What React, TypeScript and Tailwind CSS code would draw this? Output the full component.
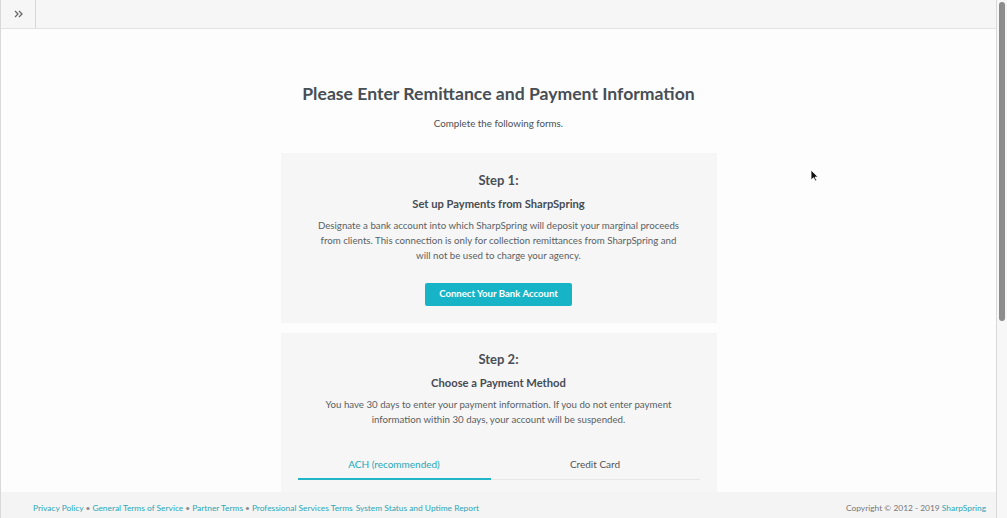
import React, { useState } from "react";

const font = { fontFamily: "Lato, 'Open Sans', Arial, sans-serif" };

type Tab = "ach" | "card";

export default function App() {
  const [tab, setTab] = useState<Tab>("ach");

  return (
    <div className="relative flex h-[518px] w-full overflow-hidden bg-[#fdfdfd] text-[#4a5056]" style={font}>
      {/* page */}
      <div className="flex min-w-0 flex-1 flex-col border-l border-r border-[#d9d9d9]">
        {/* top bar */}
        <div className="flex h-[29px] shrink-0 border-b border-[#e3e3e3] bg-[#f6f6f6]">
          <button className="flex w-[35px] items-center justify-center border-r border-[#d6d6d6] text-[#666]">
            <svg width="9" height="8" viewBox="0 0 9 8" fill="none" stroke="currentColor" strokeWidth="1.3">
              <path d="M1 1l3 3-3 3M5 1l3 3-3 3" />
            </svg>
          </button>
          <div className="flex-1" />
        </div>

        {/* content */}
        <div className="min-h-0 flex-1 overflow-hidden">
          <div className="flex flex-col items-center pt-[53px]">
            <h1 className="text-[17.6px] font-bold leading-[24px] text-[#474e55]">Please Enter Remittance and Payment Information</h1>
            <p className="mt-[9px] text-[9.75px] leading-[16px] text-[#4b4f54]">Complete the following forms.</p>

            {/* step 1 */}
            <div className="mt-[22px] flex w-[436px] flex-col items-center bg-[#f6f6f6] px-4 pb-[17px] pt-[18px] text-center">
              <h2 className="text-[13px] font-bold leading-[18px] text-[#4a4f55]">Step 1:</h2>
              <h3 className="mt-[7px] text-[11.2px] font-bold leading-[16px] text-[#474c52]">Set up Payments from SharpSpring</h3>
              <p className="mt-[6px] w-[370px] text-[9.7px] leading-[15px] text-[#5a5f64]">
                Designate a bank account into which SharpSpring will deposit your marginal proceeds from clients. This connection is only for collection remittances from SharpSpring and will not be used to charge your agency.
              </p>
              <button className="mt-[20px] h-[23px] w-[147px] rounded-[2px] bg-[#17b4c7] text-[9.6px] font-bold text-white">
                Connect Your Bank Account
              </button>
            </div>

            {/* step 2 */}
            <div className="mt-[10px] flex w-[436px] flex-col items-center bg-[#f6f6f6] px-[17px] pb-6 pt-[17px] text-center">
              <h2 className="text-[13px] font-bold leading-[18px] text-[#4a4f55]">Step 2:</h2>
              <h3 className="mt-[7px] text-[11.2px] font-bold leading-[16px] text-[#474c52]">Choose a Payment Method</h3>
              <p className="mt-[6px] w-[360px] text-[9.7px] leading-[15px] text-[#5a5f64]">
                You have 30 days to enter your payment information. If you do not enter payment information within 30 days, your account will be suspended.
              </p>
              <div className="mt-[29px] flex w-full">
                <button
                  onClick={() => setTab("ach")}
                  className={
                    tab === "ach"
                      ? "w-[193px] border-b-2 border-[#22b5c6] pb-[6px] text-[10px] leading-[16px] text-[#22a9b9]"
                      : "w-[193px] border-b border-[#e6e6e6] pb-[7px] text-[10px] leading-[16px] text-[#555]"
                  }
                >
                  ACH (recommended)
                </button>
                <button
                  onClick={() => setTab("card")}
                  className={
                    tab === "card"
                      ? "flex-1 border-b-2 border-[#22b5c6] pb-[6px] text-[10px] leading-[16px] text-[#22a9b9]"
                      : "flex-1 border-b border-[#e6e6e6] pb-[7px] text-[10px] leading-[16px] text-[#555]"
                  }
                >
                  Credit Card
                </button>
              </div>
            </div>
          </div>
        </div>

        {/* footer */}
        <div className="flex h-[26px] shrink-0 items-start justify-between bg-[#f4f4f4] pl-[32px] pr-[10px] pt-[10px] text-[8.4px] leading-[12px]">
          <div className="flex items-center text-[#2aa7b8]">
            <a>Privacy Policy</a>
            <span className="mx-[2px] text-[#888]">•</span>
            <a>General Terms of Service</a>
            <span className="mx-[2px] text-[#888]">•</span>
            <a>Partner Terms</a>
            <span className="mx-[2px] text-[#888]">•</span>
            <a>Professional Services Terms</a>
            <a className="ml-[3px]">System Status and Uptime Report</a>
          </div>
          <div className="text-[#777]">
            Copyright © 2012 - 2019 <a className="text-[#2aa7b8]">SharpSpring</a>
          </div>
        </div>
      </div>

      {/* scrollbar */}
      <div className="flex w-[10px] shrink-0 justify-center bg-[#f7f7f7] pt-[2px]">
        <div className="h-[319px] w-[6px] rounded-full bg-[#8c8c8c]" />
      </div>

      {/* cursor */}
      <svg className="absolute left-[810px] top-[169px]" width="9" height="13" viewBox="0 0 9 13">
        <path d="M1 1v10l2.5-2.3L5.3 12l1.4-.6-1.7-3.3H8z" fill="#111" stroke="#fff" strokeWidth="0.8" />
      </svg>
    </div>
  );
}
